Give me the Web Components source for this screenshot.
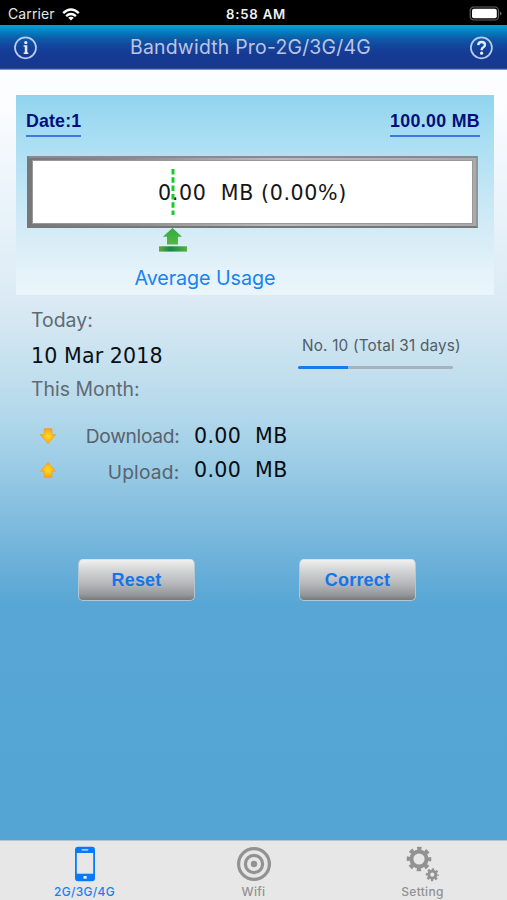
<!DOCTYPE html>
<html lang="en"><head><meta charset="utf-8"><title>Bandwidth Pro</title>
<style>html,body{margin:0;height:100%;overflow:hidden}</style></head>
<body><bandwidth-app></bandwidth-app>
<script>
const define = (name, html) => customElements.define(name, class extends HTMLElement {
  constructor() {
    super();
    const t = document.createElement('template');
    t.innerHTML = html;
    this.attachShadow({mode: 'open'}).append(t.content.cloneNode(true));
  }
});

define('status-bar', `<style>
:host{height:25px;flex:none;background:#000;color:#e6e6e6;display:grid;grid-template-columns:1fr auto 1fr;align-items:center;padding:3px 5px 0 8px;box-sizing:border-box;font:14px/20px Inter,sans-serif}
.l{display:flex;align-items:center;gap:7px;letter-spacing:.12px}
.c{font-weight:600;font-size:13.2px;letter-spacing:.8px;color:#f2f2f2;transform:translateX(1px)}
.r{justify-self:end}svg{display:block}
</style>
<div class="l"><span>Carrier</span><svg width="18" height="13" viewBox="0 0 18 13"><g fill="none" stroke="#fff" stroke-width="2.4"><path d="M1.2 5.1Q9-2 16.8 5.1"/><path d="M4.1 8.1Q9 3.8 13.9 8.1"/></g><path fill="#fff" d="M9 12.6L6.2 9.7Q9 7.6 11.8 9.7Z"/></svg></div>
<div class="c">8:58 AM</div>
<svg class="r" width="33" height="16" viewBox="0 0 33 16"><rect x="1.2" y="1" width="28.3" height="13" rx="3.6" fill="none" stroke="#666" stroke-width="1.2"/><rect x="3" y="2.7" width="24.8" height="9.6" rx="2" fill="#fff"/><path d="M31 5.5v4q1.5-.6 1.5-2t-1.5-2z" fill="#666"/></svg>`);

define('nav-bar', `<style>
:host{height:45px;flex:none;box-sizing:border-box;display:flex;align-items:center;justify-content:space-between;padding:0 13px 1px 13px;background:linear-gradient(#00a3d2 0,#0084c1 6px,#0c5eaa 13px,#12459c 21px,#163a94 29px,#17388f 43px,#425daa 44px,#b8c5e2 45px);color:#bcc5e2;font:19.4px/26px Inter,sans-serif}
svg{display:block}
span{letter-spacing:.23px;transform:translateX(-3px)}
</style>
<svg width="25" height="25" viewBox="0 0 25 25"><circle cx="12.5" cy="12.8" r="10.5" fill="none" stroke="#b9ccec" stroke-width="1.7"/><g fill="#e5edfa"><circle cx="12.8" cy="7.6" r="1.6"/><path d="M10.6 10.3h3.7v7.3h1v1.5h-4.6v-1.5h1.1v-5.8h-1.2z"/></g></svg>
<span>Bandwidth Pro-2G/3G/4G</span>
<svg width="25" height="25" viewBox="0 0 25 25"><circle cx="12.4" cy="12.8" r="10.5" fill="none" stroke="#b9ccec" stroke-width="1.7"/><path d="M9.2 10.1q.3-3.1 3.5-3.1t3.3 2.7q0 1.5-1.6 2.5-1.7 1-1.7 2.5v.5" fill="none" stroke="#e5edfa" stroke-width="2.3"/><circle cx="12.6" cy="18.2" r="1.6" fill="#e5edfa"/></svg>`);

define('quota-link', `<style>
:host{display:block;box-sizing:border-box;height:28px;padding-top:1px;border-bottom:2.4px solid #3f79e0;color:#03107b;font:bold 17.8px/22px "Liberation Sans",sans-serif;white-space:pre;letter-spacing:.33px}
</style><slot></slot>`);

define('usage-gauge', `<style>
:host{display:flex;position:relative;box-sizing:border-box;height:72px;border:2px solid;border-color:#858b8e #929699 #777 #777;background:linear-gradient(90deg,#777 0,#888 20%,#bbb 55%,#aaa 100%);padding:3px 4px}
.in{flex:1;background:#fff;box-shadow:0 0 0 1px #999;display:flex;align-items:center;justify-content:center;padding-top:2px;font:20.6px/26px "DejaVu Sans",sans-serif;color:#161616;letter-spacing:.62px;white-space:pre}
svg{position:absolute;left:142px;top:10px}
</style><div class="in"><slot></slot></div>
<svg width="4" height="48"><path d="M2 1V47" stroke="#18cb28" stroke-width="3" stroke-dasharray="5.5 2.8"/></svg>`);

define('usage-panel', `<style>
:host{display:block;box-sizing:border-box;margin:25px 13px 0 16px;height:200px;padding:14px 16px 0 10px;background:linear-gradient(#90d4ee 0,#a9def3 22%,#c5e7f5 50%,#d9edf7 74%,#e6f3fa 90%,#eaf4fb)}
.top{display:flex;justify-content:space-between;margin-right:-2px}
svg{display:block;margin:0 0 0 132px}
usage-gauge{margin:19px 0 0 1px}
p{margin:13px 0 0 108.5px;font:19.7px/26px Inter,sans-serif;color:#1683f5;letter-spacing:-.06px;white-space:nowrap}
</style>
<div class="top"><quota-link style="letter-spacing:.15px">Date:1</quota-link><quota-link>100.00 MB</quota-link></div>
<usage-gauge>0.00  MB (0.00%)</usage-gauge>
<svg width="30" height="24" viewBox="0 0 30 24"><defs><linearGradient id="a" x2="0" y2="1"><stop stop-color="#32aa43"/><stop offset="1" stop-color="#52ba3d"/></linearGradient><linearGradient id="b"><stop stop-color="#65aa37"/><stop offset=".4" stop-color="#178847"/><stop offset="1" stop-color="#50b43d"/></linearGradient></defs><path d="M14.5 0L24 8.7H20V16.4H9V8.7H4.8Z" fill="url(#a)"/><rect x="1" y="18.3" width="28" height="5.3" fill="url(#b)"/></svg>
<p>Average Usage</p>`);

define('day-progress', `<style>
:host{display:block;width:163px;color:#515d66;font:15.3px/20px Inter,sans-serif}
div{padding-left:4px;white-space:nowrap;letter-spacing:.19px}
i{display:block;margin-top:10px;width:155px;height:3px;border-radius:1.5px;background:linear-gradient(90deg,#137cef 50px,#a9b1ba 50px)}
</style><div><slot></slot></div><i></i>`);

define('traffic-row', `<style>
:host{display:grid;grid-template-columns:18px 131px auto;align-items:center;height:34px;padding-left:39px}
svg{display:block}:host([up]) svg{transform:scaleY(-1)}
.k{text-align:right;font:19.2px/26px Inter,sans-serif;letter-spacing:-.3px;color:#59636d;padding-right:8.5px}
:host([up]) .k{transform:translateY(2px);letter-spacing:.2px}
.v{font:20.6px/26px "DejaVu Sans",sans-serif;color:#080d12;white-space:pre;padding-left:6px;letter-spacing:.36px}
</style>
<svg width="18" height="18" viewBox="0 0 18 18"><defs><radialGradient id="g"><stop stop-color="#ffdc24"/><stop offset=".55" stop-color="#ffbd16"/><stop offset="1" stop-color="#f29d22"/></radialGradient></defs><path d="M5.2 1.5h7.7v6h4L9 16.6 1.1 7.5h4.1z" fill="url(#g)" stroke="#efa62d" stroke-width=".8" stroke-linejoin="round"/></svg>
<span class="k"><slot name="label"></slot></span><span class="v"><slot></slot></span>`);

define('metal-button', `<style>
:host{width:117px;height:42px;box-sizing:border-box;border:1px solid #b3c7d2;border-top-color:#d7e4ea;border-radius:5px;background:linear-gradient(#f0f0f0,#d8d8d9 22%,#b5b7b9 60%,#96999c 86%,#777a7d);display:flex;align-items:center;justify-content:center;color:#1475e9;font:bold 18px/22px "Liberation Sans",sans-serif;letter-spacing:.2px}
</style><slot></slot>`);

define('tab-item', `<style>
:host{flex:1;display:flex;flex-direction:column;align-items:center;color:#929292;font:500 12px/14px Inter,sans-serif;letter-spacing:.3px;padding-top:4px}
:host([active]){color:#1b80ef}
.i{height:37px;display:flex;align-items:center;margin-bottom:3px}
</style><div class="i"><slot name="icon"></slot></div><span><slot></slot></span>`);

define('tab-bar', `<style>
:host{height:60px;flex:none;box-sizing:border-box;border-top:1px solid #b2c4cd;background:#e7e7e7;display:flex}svg{display:block}
</style>
<tab-item active><svg slot="icon" width="22" height="36" viewBox="0 0 22 36"><rect x="1" y=".8" width="20" height="34.4" rx="3" fill="#087aff"/><rect x="2.8" y="7" width="16.4" height="20.7" fill="#e7e7e7"/><path d="M8.2 3.8h5.6" stroke="#d7e7fa" stroke-width="1.3" stroke-linecap="round"/><rect x="9.4" y="30" width="3.4" height="2.8" rx=".8" fill="#e7f0fa"/></svg>2G/3G/4G</tab-item>
<tab-item><svg slot="icon" width="36" height="36" viewBox="0 0 36 36"><g fill="none" stroke="#929292" stroke-width="3.2"><circle cx="18" cy="18" r="15.4"/><circle cx="18" cy="18" r="8.6"/></g><circle cx="18" cy="18" r="3.2" fill="#929292"/></svg>Wifi</tab-item>
<tab-item><svg slot="icon" width="34" height="36" viewBox="0 0 34 36"><g fill="none" stroke="#929292"><circle cx="13" cy="13" r="7.6" stroke-width="4"/><circle cx="13" cy="13" r="10.6" stroke-width="3.4" stroke-dasharray="4.4 3.925" stroke-dashoffset="2.2"/><circle cx="26.3" cy="28.7" r="3.5" stroke-width="2.8"/><circle cx="26.3" cy="28.7" r="5.4" stroke-width="2.2" stroke-dasharray="2.3 1.941" stroke-dashoffset="1.15"/></g></svg>Setting</tab-item>`);

define('bandwidth-app', `<style>
:host{display:flex;flex-direction:column;height:900px;width:507px;overflow:hidden;font-family:Inter,sans-serif}
main{flex:1;min-height:0;background:linear-gradient(#fdfeff 0,#fafcff 40px,#e9f3fa 140px,#d9e9f3 240px,#b5d9eb 340px,#9bcce6 395px,#7cb9dd 460px,#57a6d5 535px,#54a5d4 100%);display:flow-root}
.info{display:grid;grid-template-columns:267px 1fr;padding:12px 0 0 31px;color:#606a73;font:19.4px/26px Inter,sans-serif;letter-spacing:.03px}
.date{font:20.6px/26px "DejaVu Sans",sans-serif;color:#090f14;margin:10px 0 7px;letter-spacing:.1px}
day-progress{margin-top:29px}
.traffic{margin-top:17px}
.buttons{display:flex;gap:104px;padding:72px 0 0 78px}
</style>
<status-bar></status-bar><nav-bar></nav-bar>
<main><usage-panel></usage-panel>
<section class="info"><div><div>Today:</div><div class="date">10 Mar 2018</div><div>This Month:</div></div><day-progress>No. 10 (Total 31 days)</day-progress></section>
<section class="traffic"><traffic-row><span slot="label">Download:</span>0.00  MB</traffic-row><traffic-row up><span slot="label">Upload:</span>0.00  MB</traffic-row></section>
<section class="buttons"><metal-button>Reset</metal-button><metal-button>Correct</metal-button></section>
</main><tab-bar></tab-bar>`);
</script></body></html>
